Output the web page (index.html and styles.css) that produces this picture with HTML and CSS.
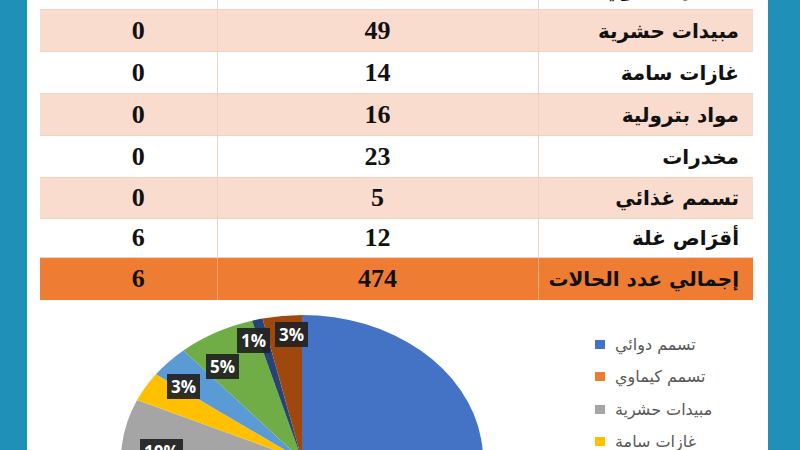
FILE: index.html
```html
<!DOCTYPE html>
<html lang="ar">
<head>
<meta charset="utf-8">
<link rel="stylesheet" href="styles.css">
</head>
<body>
<div class="frame">
  <div class="band band-left"></div>
  <main class="sheet">
    <table class="stats" dir="rtl">
      <tr class="row row-cut"><td class="name">تسمم كيماوي</td><td class="num"></td><td class="num"></td></tr>
      <tr class="row tint"><td class="name">مبيدات حشرية</td><td class="num">49</td><td class="num">0</td></tr>
      <tr class="row"><td class="name">غازات سامة</td><td class="num">14</td><td class="num">0</td></tr>
      <tr class="row tint"><td class="name">مواد بترولية</td><td class="num">16</td><td class="num">0</td></tr>
      <tr class="row"><td class="name">مخدرات</td><td class="num">23</td><td class="num">0</td></tr>
      <tr class="row tint r5"><td class="name">تسمم غذائي</td><td class="num">5</td><td class="num">0</td></tr>
      <tr class="row r6"><td class="name">أقرَاص غلة</td><td class="num">12</td><td class="num">6</td></tr>
      <tr class="row total"><td class="name">إجمالي عدد الحالات</td><td class="num">474</td><td class="num">6</td></tr>
    </table>
    <section class="chart">
      <div class="pie">
        <svg width="362" height="290" viewBox="0 0 362 290">
          <path fill="#4472c4" d="M181,145 L181,0 A181,145 0 1 1 17,206.3 Z"/>
          <path fill="#ed7d31" d="M181,145 L17,206.3 A181,145 0 0 1 4.7,177.6 Z"/>
          <path fill="#a5a5a5" d="M181,145 L4.7,177.6 A181,145 0 0 1 16.1,85.1 Z"/>
          <path fill="#ffc000" d="M181,145 L16.1,85.1 A181,145 0 0 1 34.9,59.3 Z"/>
          <path fill="#5b9bd5" d="M181,145 L34.9,59.3 A181,145 0 0 1 62.4,35.4 Z"/>
          <path fill="#70ad47" d="M181,145 L62.4,35.4 A181,145 0 0 1 131,5.7 Z"/>
          <path fill="#264478" d="M181,145 L131,5.7 A181,145 0 0 1 141.5,3.5 Z"/>
          <path fill="#9e480e" d="M181,145 L141.5,3.5 A181,145 0 0 1 181,0 Z"/>
        </svg>
        <span class="tag" style="left:154px;top:7px">3%</span>
        <span class="tag" style="left:116px;top:13px">1%</span>
        <span class="tag" style="left:85px;top:39px">5%</span>
        <span class="tag" style="left:46px;top:59px">3%</span>
        <span class="tag" style="left:19px;top:124px">10%</span>
      </div>
      <ul class="legend">
        <li class="item"><span class="key k-blue"></span><span class="label" dir="rtl">تسمم دوائي</span></li>
        <li class="item"><span class="key k-orange"></span><span class="label" dir="rtl">تسمم كيماوي</span></li>
        <li class="item"><span class="key k-gray"></span><span class="label" dir="rtl">مبيدات حشرية</span></li>
        <li class="item"><span class="key k-yellow"></span><span class="label" dir="rtl">غازات سامة</span></li>
      </ul>
    </section>
  </main>
  <div class="band band-right"></div>
</div>
</body>
</html>
```
FILE: styles.css
```css
html, body {
  margin: 0;
  padding: 0;
  width: 800px;
  height: 450px;
  overflow: hidden;
  background: #ffffff;
}
.frame {
  display: flex;
  width: 800px;
  height: 450px;
}
.band {
  flex: none;
  background: #1f91b9;
}
.band-left { width: 27px; }
.band-right { width: 32px; }
.sheet {
  flex: 1;
  padding: 0 16px 0 13px;
  overflow: hidden;
}
.stats {
  width: 712px;
  border-collapse: collapse;
  table-layout: fixed;
  margin-top: -32px;
}
.row td {
  height: 41px;
  padding: 0;
  border-left: 1px solid #ecd3c6;
  border-bottom: 1px solid #f2d2c2;
  vertical-align: middle;
}
.row td:last-child { border-left: none; }
.row.r5 td { height: 40px; }
.row.r6 td { height: 38px; }
.tint td { background: #fadccf; }
.total td {
  height: 42px;
  background: #ee7d33;
  border-left-color: #f4a777;
  border-bottom: none;
}
.name {
  width: 215px;
  text-align: right;
  padding-right: 14px !important;
  font-family: "DejaVu Sans", sans-serif;
  font-weight: bold;
  font-size: 20px;
  color: #111;
  box-sizing: border-box;
}
.num {
  text-align: center;
  font-family: "Liberation Serif", serif;
  font-weight: bold;
  font-size: 26px;
  color: #111;
}
.num:nth-child(2) { width: 320px; }
.num:nth-child(3) { width: 177px; padding-left: 20px !important; box-sizing: border-box; }
.chart {
  display: flex;
  align-items: flex-start;
  margin-top: 15px;
  padding-left: 81px;
}
.pie {
  position: relative;
  width: 362px;
  height: 290px;
  flex: none;
}
.pie svg { display: block; }
.tag {
  position: absolute;
  background: rgba(34, 34, 34, 0.92);
  color: #ffffff;
  font-family: "Open Sans", "DejaVu Sans", sans-serif;
  font-weight: bold;
  font-size: 17px;
  line-height: 25px;
  padding: 0 4px;
}
.legend {
  list-style: none;
  margin: 13px 0 0 112px;
  padding: 0;
}
.item {
  display: flex;
  align-items: center;
  gap: 10px;
  height: 32.5px;
}
.key {
  width: 10px;
  height: 9px;
  flex: none;
}
.k-blue { background: #4472c4; }
.k-orange { background: #ed7d31; }
.k-gray { background: #a5a5a5; }
.k-yellow { background: #ffc000; }
.label {
  font-family: "DejaVu Sans", sans-serif;
  font-size: 16px;
  color: #595959;
}
```
